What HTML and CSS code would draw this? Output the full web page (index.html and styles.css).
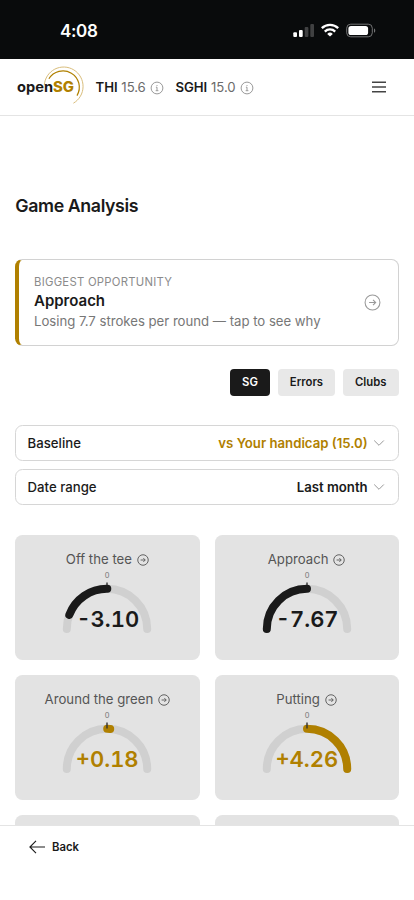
FILE: index.html
```html
<!DOCTYPE html>
<html lang="en">
<head>
<meta charset="utf-8">
<meta name="viewport" content="width=device-width, initial-scale=1">
<title>Game Analysis</title>
<link rel="stylesheet" href="styles.css">
</head>
<body>
<svg width="0" height="0" class="defs">
  <symbol id="go" viewBox="0 0 16 16"><circle cx="8" cy="8" r="7"/><path d="M4.8 8h6M8.5 5.5 11 8l-2.5 2.5"/></symbol>
  <symbol id="info" viewBox="0 0 14 14"><circle cx="7" cy="7" r="5.9"/><path d="M5.9 6.2H7v3.4M5.7 9.7h2.7M7 4v.9"/></symbol>
  <symbol id="down" viewBox="0 0 12 8"><path d="M1.2 1.5 6 6.3l4.8-4.8"/></symbol>
</svg>
<div class="status">
  <span class="time">4:08</span>
  <svg class="signals" width="84" height="16" viewBox="0 0 84 16">
    <g fill="#fff"><rect x="0.3" y="9.3" width="3.7" height="4.7" rx="1"/><rect x="6" y="7" width="3.7" height="7" rx="1"/></g>
    <g fill="#404142"><rect x="11.7" y="4" width="3.7" height="10" rx="1"/><rect x="17.3" y="1" width="3.7" height="13" rx="1"/></g>
    <g fill="none" stroke="#fff" stroke-width="2.3"><path d="M28.8 5.2a11.8 11.8 0 0 1 16.4 0"/><path d="M31.8 8.6a7.4 7.4 0 0 1 10.4 0"/></g>
    <path d="M34.2 10.9a4.1 4.1 0 0 1 5.6 0L37 13.6z" fill="#fff"/>
    <rect x="53.7" y="1.2" width="25.6" height="12.6" rx="4" fill="none" stroke="#737475"/>
    <rect x="55.4" y="2.9" width="19.7" height="9.2" rx="2.6" fill="#fff"/>
    <path d="M81 5.4c1.7.5 1.7 3.7 0 4.2z" fill="#737475"/>
  </svg>
</div>
<header class="header">
  <svg class="logo" width="70" height="40" viewBox="0 0 70 40">
    <g fill="none" stroke="#b08000"><path d="M29.3 18.2a19.4 19.4 0 1 1 29.1 18" stroke="#d9bd7b" stroke-width="1"/><path d="M33.9 11.8A16.1 16.1 0 0 1 62 28.6" stroke-width="1.2"/></g>
    <text class="logo-text" x="2" y="25" textLength="36" lengthAdjust="spacingAndGlyphs">open</text>
    <text class="logo-text logo-sg" x="38" y="25" textLength="21" lengthAdjust="spacingAndGlyphs">SG</text>
  </svg>
  <div class="index thi"><b>THI</b><span>15.6</span><svg class="info"><use href="#info"/></svg></div>
  <div class="index"><b>SGHI</b><span>15.0</span><svg class="info"><use href="#info"/></svg></div>
  <svg class="menu" width="16" height="12" viewBox="0 0 16 12"><path d="M1 1.2h14M1 6h14M1 10.8h14"/></svg>
</header>
<main class="main">
  <h1>Game Analysis</h1>
  <section class="opportunity">
    <div>
      <p class="eyebrow">BIGGEST OPPORTUNITY</p>
      <p class="area">Approach</p>
      <p class="detail">Losing 7.7 strokes per round — tap to see why</p>
    </div>
    <svg class="go-large"><use href="#go"/></svg>
  </section>
  <nav class="tabs"><span class="tab active">SG</span><span class="tab errors">Errors</span><span class="tab clubs">Clubs</span></nav>
  <section class="filters">
    <div class="filter"><span>Baseline</span><b class="gold">vs Your handicap (15.0)</b><svg class="down"><use href="#down"/></svg></div>
    <div class="filter"><span>Date range</span><b>Last month</b><svg class="down"><use href="#down"/></svg></div>
  </section>
  <section class="grid">
    <article class="card">
      <h2>Off the tee<svg class="go"><use href="#go"/></svg></h2>
      <svg class="gauge" viewBox="0 0 100 68"><text class="zero" x="50" y="11">0</text><path class="track" d="M9.8 62a40.2 40.2 0 0 1 80.4 0"/><path class="tick" d="M50 15.6v6"/><path class="loss" d="M12.3 47.9A40.2 40.2 0 0 1 50.3 21.8"/><text class="value" x="50.8" y="59.7">-3.10</text></svg>
    </article>
    <article class="card">
      <h2>Approach<svg class="go"><use href="#go"/></svg></h2>
      <svg class="gauge" viewBox="0 0 100 68"><text class="zero" x="50" y="11">0</text><path class="track" d="M9.8 62a40.2 40.2 0 0 1 80.4 0"/><path class="tick" d="M50 15.6v6"/><path class="loss" d="M9.8 62A40.2 40.2 0 0 1 50 21.8"/><text class="value" x="50.2" y="59.7">-7.67</text></svg>
    </article>
    <article class="card">
      <h2>Around the green<svg class="go"><use href="#go"/></svg></h2>
      <svg class="gauge" viewBox="0 0 100 68"><text class="zero" x="50" y="11">0</text><path class="track" d="M9.8 62a40.2 40.2 0 0 1 80.4 0"/><path class="gain" d="M50.2 21.8q1.6 0 3 .1"/><path class="tick" d="M50 15.6v6"/><text class="value gold" x="50.2" y="59.7">+0.18</text></svg>
    </article>
    <article class="card">
      <h2>Putting<svg class="go"><use href="#go"/></svg></h2>
      <svg class="gauge" viewBox="0 0 100 68"><text class="zero" x="50" y="11">0</text><path class="track" d="M9.8 62a40.2 40.2 0 0 1 80.4 0"/><path class="gain" d="M50 21.8A40.2 40.2 0 0 1 90.2 62"/><path class="tick" d="M50 15.6v6"/><text class="value gold" x="49.8" y="59.7">+4.26</text></svg>
    </article>
    <article class="card"></article>
    <article class="card"></article>
  </section>
</main>
<footer class="footer">
  <svg width="17" height="14" viewBox="0 0 17 14"><path d="M16 7H1M7 .8.9 7 7 13.2"/></svg>
  <span>Back</span>
</footer>
</body>
</html>
```
FILE: styles.css
```css
* { box-sizing: border-box; margin: 0; padding: 0; }
body {
  display: flex; flex-direction: column;
  height: 900px; overflow: hidden;
  background: #fff; color: #1a1a1a;
  font-family: Inter, "Liberation Sans", sans-serif;
}
svg { display: block; flex: none; }
.defs { position: absolute; }
.status {
  flex: none; height: 58.5px; padding: 2px 37px 0 60px;
  display: flex; align-items: center; justify-content: space-between;
  background: #090b0c; color: #fff;
}
.time { font-size: 17px; font-weight: 600; line-height: 20px; padding-top: 2px; letter-spacing: -.35px; }
.signals { margin-top: 1px; }
.header {
  flex: none; height: 57px; padding: 0 27.5px 0 15px;
  display: flex; align-items: center;
  border-bottom: 1px solid #e4e4e4;
}
.logo { overflow: visible; }
.logo-text { font: 700 14px Inter, sans-serif; fill: #1a1a1a; }
.logo-sg { font-weight: 800; fill: #b08000; }
.index { display: flex; align-items: center; margin-left: 11.3px; font-size: 13.2px; letter-spacing: -.08px; }
.index.thi { margin-left: 10.5px; }
.index b { font-weight: 600; margin-right: 3.9px; }
.index span { color: #6b6b6b; }
.info { width: 14px; height: 14px; margin: 2px 0 0 4.5px; fill: none; stroke: #999; stroke-width: 1; }
.menu { margin-left: auto; fill: none; stroke: #444; stroke-width: 1.5; }
.main { flex: none; height: 709.5px; overflow: hidden; padding: 78.5px 15.3px 0; }
h1 { font-size: 17.8px; line-height: 24px; font-weight: 600; letter-spacing: -0.4px; }
.opportunity {
  margin-top: 40.5px; height: 87.5px; padding: 0 17px 0 14.7px;
  display: flex; align-items: center; justify-content: space-between;
  border: 1px solid #d2d2d2; border-left: 4px solid #b08000; border-radius: 7.5px;
}
.eyebrow { font-size: 11.3px; line-height: 17px; letter-spacing: .27px; padding-top: 1px; color: #8b8b8b; }
.area { font-size: 15px; line-height: 20px; font-weight: 600; }
.detail { font-size: 13.2px; line-height: 21px; letter-spacing: -.02px; color: #777; }
.go-large { width: 17px; height: 17px; fill: none; stroke: #999; }
.tabs { display: flex; justify-content: flex-end; gap: 7.5px; margin-top: 22.5px; }
.tab {
  height: 27px; width: 40.5px; border-radius: 4px; background: #e8e8e8;
  font-size: 11.3px; font-weight: 600; line-height: 27px; text-align: center;
}
.tab.active { background: #1a1a1a; color: #fff; }
.tab.errors { width: 57.5px; }
.tab.clubs { width: 56px; }
.filters { display: grid; gap: 7.5px; margin-top: 29.5px; }
.filter {
  height: 36px; padding: 0 12.5px 0 11.3px; display: flex; align-items: center;
  border: 1px solid #d6d6d6; border-radius: 7.5px; font-size: 13.2px;
}
.filter span { font-weight: 500; }
.filter b { margin-left: auto; font-weight: 600; }
.gold { color: #b08000; }
.down { width: 12px; height: 8px; margin-left: 5.5px; fill: none; stroke: #999; }
.grid { display: grid; grid-template-columns: 1fr 1fr; gap: 15px; margin-top: 30px; }
.card {
  height: 125px; padding-top: 14px; border-radius: 7.5px; background: #e3e3e3;
  display: flex; flex-direction: column; align-items: center;
}
h2 { display: flex; align-items: center; font-size: 13.2px; line-height: 20px; font-weight: 400; color: #555; }
.go { width: 12px; height: 12px; margin: 2px 0 0 5px; fill: none; stroke: #555; stroke-width: 1.2; }
.gauge { width: 100px; height: 68px; margin-top: -2px; }
.gauge path { fill: none; stroke-width: 8; stroke-linecap: round; }
.gauge text { text-anchor: middle; }
.zero { font-size: 7.5px; fill: #777; }
.gauge .track { stroke: #d0d0d0; }
.gauge .loss { stroke: #1a1a1a; }
.gauge .gain { stroke: #b08000; }
.gauge .tick { stroke: #333; stroke-width: 1.4; stroke-linecap: butt; }
.value { font-size: 22px; font-weight: 600; font-variant-numeric: tabular-nums; fill: #1a1a1a; }
.value.gold { fill: #b08000; }
.footer {
  flex: 1; padding: 11.5px 0 0 28.5px; display: flex; align-items: flex-start; gap: 6.5px;
  border-top: 1px solid #e4e4e4; background: #fff;
  font-size: 11.3px; font-weight: 600; line-height: 18px;
}
.footer svg { margin-top: 2px; fill: none; stroke: #1a1a1a; stroke-width: 1.1; }
```
